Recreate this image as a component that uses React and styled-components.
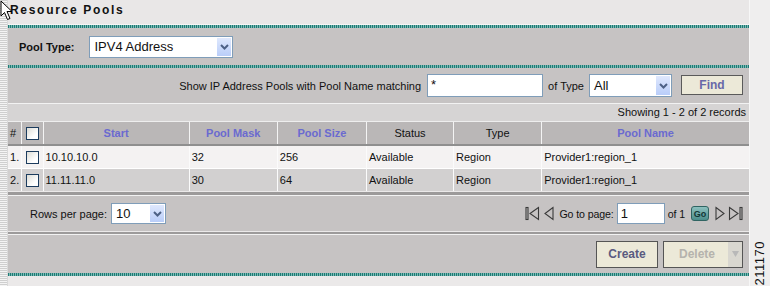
import React from "react";
import styled, { createGlobalStyle } from "styled-components";

const GlobalStyle = createGlobalStyle`
  html, body {
    margin: 0;
    padding: 0;
    background: #ebe9e9;
    font-family: "Liberation Sans", Arial, sans-serif;
    font-size: 11px;
    color: #111;
  }
`;

const pools = [
  { start: "10.10.10.0", mask: "32", size: "256", status: "Available", type: "Region", name: "Provider1:region_1" },
  { start: "11.11.11.0", mask: "30", size: "64", status: "Available", type: "Region", name: "Provider1:region_1" },
];

const columns = [
  { label: "#", width: 13, sort: false, align: "left" },
  { label: "", width: 22, sort: false, check: true },
  { label: "Start", width: 146, sort: true },
  { label: "Pool Mask", width: 88, sort: true },
  { label: "Pool Size", width: 89, sort: true },
  { label: "Status", width: 87, sort: false },
  { label: "Type", width: 88, sort: false },
  { label: "Pool Name", width: 207, sort: true },
];

export default function App() {
  return (
    <>
      <GlobalStyle />
      <Frame>
        <LeftStrip />
        <Main>
          <Title>Resource Pools</Title>
          <TealRule />
          <PoolTypeBar>
            <BoldLabel>Pool Type:</BoldLabel>
            <Select width={144} height={22} big>
              <span>IPV4 Address</span>
              <DropArrow />
            </Select>
          </PoolTypeBar>
          <TealRule />
          <FilterRow>
            <span>Show IP Address Pools with Pool Name matching</span>
            <TextBox width={116} height={23}>*</TextBox>
            <span>of Type</span>
            <Select width={83} height={23} big>
              <span>All</span>
              <DropArrow />
            </Select>
            <FindButton>Find</FindButton>
          </FilterRow>
          <ShowingRow>Showing 1 - 2 of 2 records</ShowingRow>
          <Grid>
            <colgroup>
              {columns.map((c, i) => (
                <col key={i} style={{ width: c.width }} />
              ))}
            </colgroup>
            <thead>
              <tr>
                {columns.map((c, i) => (
                  <HeadCell key={i} sort={c.sort} $left={i === 0}>
                    {c.check ? <CheckBox /> : c.label}
                  </HeadCell>
                ))}
              </tr>
            </thead>
            <tbody>
              {pools.map((p, i) => (
                <Row key={i} odd={i % 2 === 1}>
                  <Cell>{i + 1}.</Cell>
                  <Cell center>
                    <CheckBox />
                  </Cell>
                  <Cell>{p.start}</Cell>
                  <Cell>{p.mask}</Cell>
                  <Cell>{p.size}</Cell>
                  <Cell>{p.status}</Cell>
                  <Cell>{p.type}</Cell>
                  <Cell>{p.name}</Cell>
                </Row>
              ))}
            </tbody>
          </Grid>
          <GraySeparator thick={3} />
          <PagerBar>
            <RowsPer>
              <span>Rows per page:</span>
              <Select width={55} height={21} big>
                <span>10</span>
                <DropArrow />
              </Select>
            </RowsPer>
            <Pager>
              <NavIcon kind="first" />
              <NavIcon kind="prev" />
              <PagerText>Go to page:</PagerText>
              <TextBox width={48} height={21}>1</TextBox>
              <PagerText>of 1</PagerText>
              <GoButton>Go</GoButton>
              <NavIcon kind="next" />
              <NavIcon kind="last" />
            </Pager>
          </PagerBar>
          <GraySeparator thick={2} />
          <ButtonRow>
            <ActionButton>Create</ActionButton>
            <SplitButton>
              <span>Delete</span>
              <SplitArrow>
                <svg width="7" height="6" viewBox="0 0 7 6">
                  <polygon points="0,0 7,0 3.5,6" fill="#b8b8b8" />
                </svg>
              </SplitArrow>
            </SplitButton>
          </ButtonRow>
          <TealRule />
        </Main>
        <Gutter>
          <FigureId>211170</FigureId>
        </Gutter>
        <Cursor>
          <svg width="14" height="21" viewBox="0 0 14 21">
            <path
              d="M1 1 L1 16 L4.5 12.5 L7.5 19.5 L10 18.5 L7 11.5 L12 11.5 Z"
              fill="#fff"
              stroke="#000"
              strokeWidth="1"
              strokeLinejoin="miter"
            />
          </svg>
        </Cursor>
      </Frame>
    </>
  );
}

function DropArrow() {
  return (
    <ArrowBox>
      <svg width="9" height="6" viewBox="0 0 9 6">
        <polyline points="1,1 4.5,4.5 8,1" fill="none" stroke="#4d6185" strokeWidth="2" />
      </svg>
    </ArrowBox>
  );
}

function NavIcon({ kind }) {
  const s = { fill: "none", stroke: "#3a3a3a", strokeWidth: 1.1 };
  if (kind === "first")
    return (
      <svg width="15" height="15" viewBox="0 0 15 15">
        <rect x="1" y="1.5" width="2" height="12" {...s} />
        <polygon points="13.5,1.5 5,7.5 13.5,13.5" {...s} />
      </svg>
    );
  if (kind === "prev")
    return (
      <svg width="10" height="15" viewBox="0 0 10 15">
        <polygon points="9,1.5 1,7.5 9,13.5" {...s} />
      </svg>
    );
  if (kind === "next")
    return (
      <svg width="10" height="15" viewBox="0 0 10 15">
        <polygon points="1,1.5 9,7.5 1,13.5" {...s} />
      </svg>
    );
  return (
    <svg width="15" height="15" viewBox="0 0 15 15">
      <polygon points="1.5,1.5 10,7.5 1.5,13.5" {...s} />
      <rect x="12" y="1.5" width="2" height="12" {...s} />
    </svg>
  );
}

const Frame = styled.div`
  position: relative;
  display: flex;
  width: 770px;
  height: 286px;
  overflow: hidden;
`;

const LeftStrip = styled.div`
  width: 7px;
  flex: none;
  border-right: 1px solid #d9d9d9;
  background: repeating-linear-gradient(180deg, #cfcfcf 0 1px, #f4f4f4 1px 2px);
`;

const Main = styled.div`
  width: 741px;
  flex: none;
  display: flex;
  flex-direction: column;
`;

const Title = styled.div`
  height: 24px;
  padding-left: 2px;
  line-height: 20px;
  font-weight: bold;
  font-size: 12px;
  letter-spacing: 1.7px;
  background: #e9e7e7;
  border-bottom: 1px solid #f6f6f6;
`;

const TealRule = styled.div`
  height: 3px;
  flex: none;
  background:
    repeating-linear-gradient(90deg, #1e7a74 0 1px, #7ab9b4 1px 2px);
`;

const PoolTypeBar = styled.div`
  height: 37px;
  display: flex;
  align-items: center;
  padding-left: 11px;
  gap: 15px;
  background: #c6c3c3;
`;

const BoldLabel = styled.span`
  font-weight: bold;
`;

const Select = styled.div`
  width: ${(p) => p.width}px;
  height: ${(p) => p.height}px;
  box-sizing: border-box;
  border: 1px solid #7f9db9;
  background: #fff;
  display: flex;
  align-items: center;
  justify-content: space-between;
  padding-left: 4px;
  font-size: ${(p) => (p.big ? 13 : 11)}px;
`;

const ArrowBox = styled.div`
  width: 16px;
  height: 100%;
  box-sizing: border-box;
  border: 1px solid #fff;
  background: linear-gradient(180deg, #dfe8fd 0%, #b9cdf9 100%);
  display: flex;
  align-items: center;
  justify-content: center;
`;

const TextBox = styled.div`
  width: ${(p) => p.width}px;
  height: ${(p) => p.height}px;
  box-sizing: border-box;
  border: 1px solid #7f9db9;
  background: #fff;
  padding: 2px 3px;
  font-size: 13px;
  line-height: 16px;
`;

const FilterRow = styled.div`
  height: 36px;
  display: flex;
  align-items: center;
  justify-content: flex-end;
  gap: 5px;
  padding-right: 6px;
  background: #c6c3c3;
  border-bottom: 1px solid #f2f2f2;
  box-sizing: border-box;
  & > span:first-child {
    margin-right: 1px;
  }
`;

const FindButton = styled.div`
  width: 62px;
  height: 20px;
  margin-left: 4px;
  margin-bottom: 2px;
  box-sizing: border-box;
  border: 1px solid #5a5a5a;
  background: #ece9d8;
  color: #6868a8;
  font-weight: bold;
  font-size: 12px;
  display: flex;
  align-items: center;
  justify-content: center;
`;

const ShowingRow = styled.div`
  height: 17px;
  line-height: 17px;
  text-align: right;
  padding-right: 3px;
  background: #d6d4d4;
  border-bottom: 1px solid #eeeeee;
`;

const Grid = styled.table`
  width: 741px;
  table-layout: fixed;
  border-collapse: collapse;
  font-size: 11px;
`;

const HeadCell = styled.th`
  height: 22px;
  padding: 0 ${(p) => (p.$left ? 2 : 0)}px;
  text-align: ${(p) => (p.$left ? "left" : "center")};
  background: #bab7b7;
  color: ${(p) => (p.sort ? "#6a6ad0" : "#111")};
  font-weight: ${(p) => (p.sort ? "bold" : "normal")};
  border-left: 1px solid #f4f4f4;
  border-bottom: 2px solid #8f8f8f;
  &:first-child {
    border-left: none;
  }
  vertical-align: middle;
  line-height: 0;
  & > * {
    vertical-align: middle;
  }
`;

const Row = styled.tr`
  background: ${(p) => (p.odd ? "#d2d0d0" : "#f4f2f2")};
  border-top: 1px solid #ffffff;
`;

const Cell = styled.td`
  height: 22px;
  padding: 0 2px;
  text-align: ${(p) => (p.center ? "center" : "left")};
  border-left: 1px solid #fbfbfb;
  white-space: nowrap;
  line-height: 14px;
  &:first-child {
    border-left: none;
  }
  & > * {
    vertical-align: middle;
  }
`;

const CheckBox = styled.span`
  display: inline-block;
  width: 13px;
  height: 13px;
  box-sizing: border-box;
  border: 1px solid #1c3c5e;
  background: linear-gradient(135deg, #dcdcd6 0%, #ffffff 70%);
  vertical-align: middle;
`;

const GraySeparator = styled.div`
  height: ${(p) => p.thick}px;
  flex: none;
  margin-top: 1px;
  background: #9c9a9a;
  border-bottom: 1px solid #f2f2f2;
`;

const PagerBar = styled.div`
  height: 35px;
  display: flex;
  align-items: center;
  justify-content: space-between;
  padding: 0 6px 0 22px;
  background: #c6c3c3;
`;

const RowsPer = styled.div`
  display: flex;
  align-items: center;
  gap: 4px;
`;

const Pager = styled.div`
  display: flex;
  align-items: center;
  gap: 3px;
  & > svg:nth-child(1) {
    margin-right: 1px;
  }
  & > svg:nth-child(2) {
    margin-right: 2px;
  }
`;

const PagerText = styled.span`
  font-size: 10.6px;
  letter-spacing: -0.1px;
`;

const GoButton = styled.div`
  width: 18px;
  height: 15px;
  margin: 0 3px;
  box-sizing: border-box;
  border: 1px solid #2f6462;
  border-radius: 3px;
  background: linear-gradient(180deg, #8cc0be 0%, #4b8c8a 100%);
  color: #123636;
  font-weight: bold;
  font-size: 9px;
  display: flex;
  align-items: center;
  justify-content: center;
`;

const ButtonRow = styled.div`
  height: 38px;
  display: flex;
  align-items: center;
  justify-content: flex-end;
  gap: 5px;
  padding-right: 6px;
  background: #c6c3c3;
`;

const ActionButton = styled.div`
  width: 62px;
  height: 27px;
  box-sizing: border-box;
  border: 1px solid #555;
  background: #ece9d8;
  color: #5a5a80;
  font-weight: bold;
  font-size: 12px;
  display: flex;
  align-items: center;
  justify-content: center;
`;

const SplitButton = styled(ActionButton)`
  width: 80px;
  color: #b5b3ad;
  justify-content: space-between;
  padding-left: 15px;
`;

const SplitArrow = styled.div`
  width: 14px;
  height: 100%;
  background: #d9d7d0;
  display: flex;
  align-items: center;
  justify-content: center;
`;

const Gutter = styled.div`
  flex: 1;
  border-left: 1px solid #f7f7f7;
  background: #efeeee;
  display: flex;
  align-items: flex-end;
  justify-content: center;
  padding-bottom: 1px;
`;

const FigureId = styled.div`
  writing-mode: vertical-rl;
  transform: rotate(180deg);
  font-size: 13px;
  letter-spacing: 0.5px;
  color: #111;
  padding-left: 1px;
`;

const Cursor = styled.div`
  position: absolute;
  left: 0;
  top: 0;
  line-height: 0;
`;
